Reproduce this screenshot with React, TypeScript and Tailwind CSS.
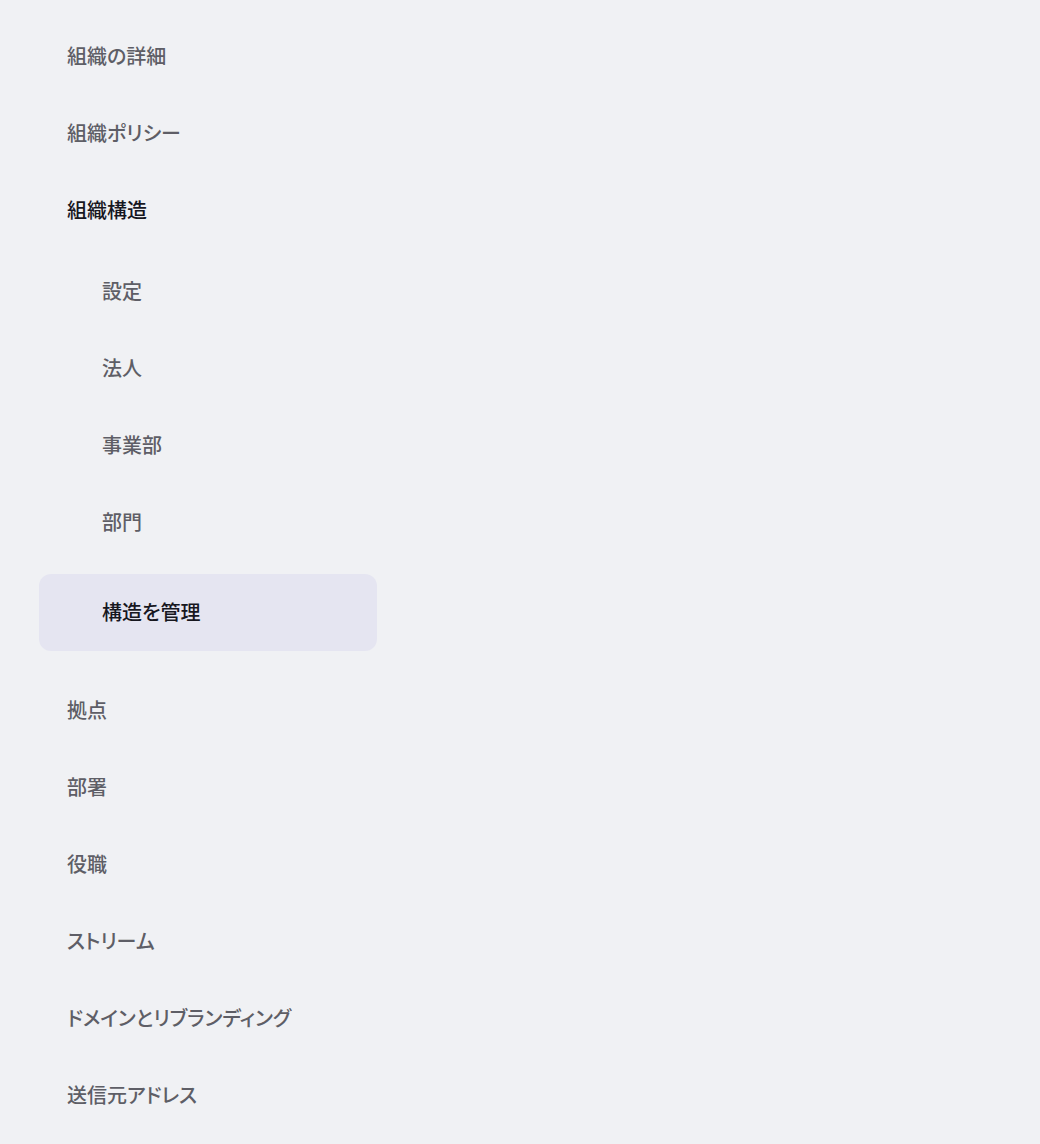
const topItems = ['組織の詳細', '組織ポリシー']
const subItems = ['設定', '法人', '事業部', '部門']
const bottomItems = ['拠点', '部署', '役職', 'ストリーム', 'ドメインとリブランディング', '送信元アドレス']

function NavItem({ label, sub, active }: { label: string; sub?: boolean; active?: boolean }) {
  return (
    <div
      className={`flex h-[77px] items-center rounded-xl ${sub ? 'pl-[63px]' : 'pl-[28px]'} ${
        active ? 'bg-[#e5e5f1] text-[#17171f]' : 'text-[#5e5e66]'
      }`}
    >
      <span>{label}</span>
    </div>
  )
}

export default function App() {
  return (
    <div
      className="min-h-[1144px] w-full bg-[#f0f1f4] pt-[18px] pl-[39px] text-[20px] font-medium leading-none [font-family:Inter,'Noto_Sans_CJK_JP',sans-serif] [font-feature-settings:'palt']"
    >
      <nav className="w-[338px]">
        {topItems.map((item) => (
          <NavItem key={item} label={item} />
        ))}
        <div className="flex h-[77px] items-center pl-[28px] text-[#17171f]">組織構造</div>

        {/* Sub items */}
        <div className="mt-[4px]">
          {subItems.map((item) => (
            <NavItem key={item} label={item} sub />
          ))}
        </div>
        <div className="mt-[13px]">
          <NavItem label="構造を管理" sub active />
        </div>

        <div className="mt-[21px]">
          {bottomItems.map((item) => (
            <NavItem key={item} label={item} />
          ))}
        </div>
      </nav>
    </div>
  )
}
